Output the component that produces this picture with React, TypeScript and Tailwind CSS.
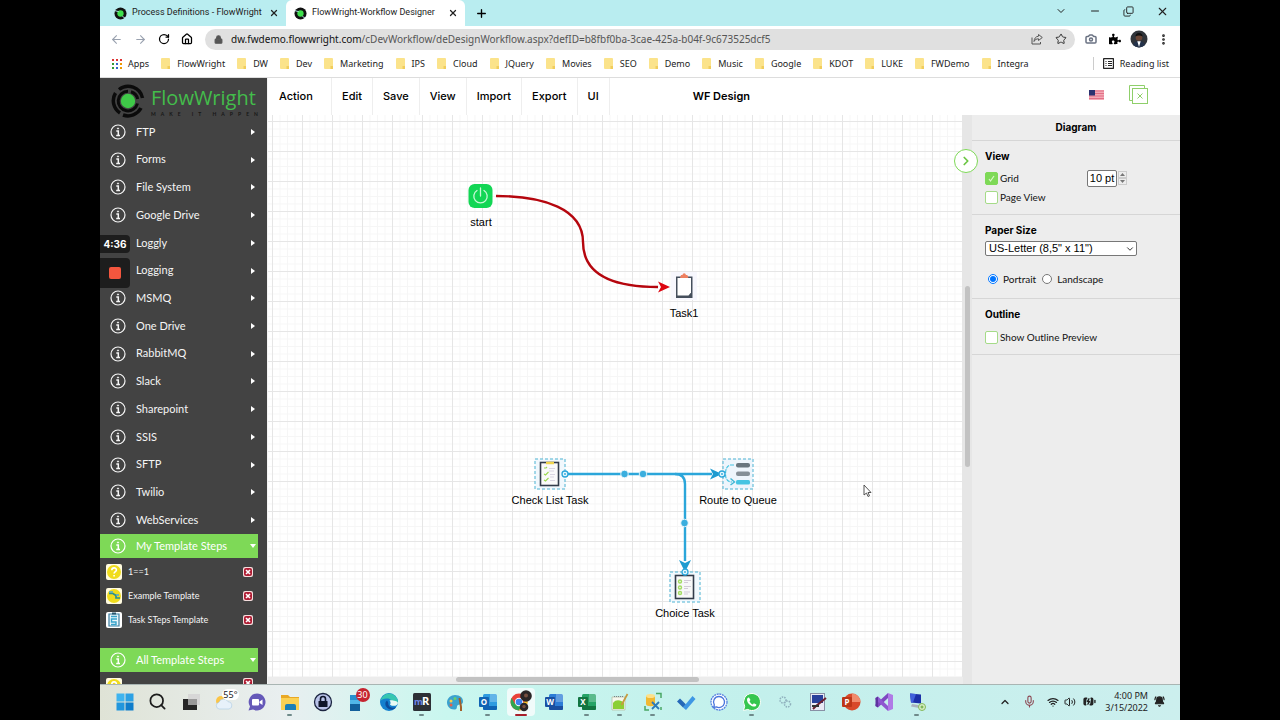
import React, { useState } from 'react';
import {
  ArrowLeft, ArrowRight, BatteryCharging, BellRing, Camera, ChevronDown, ChevronRight, ChevronUp, Copy,
  Home, Lock, Mic, Minus, MoreVertical, Plus, RotateCw, Search, Star, Volume2, Wifi, X,
} from 'lucide-react';
import { FaPuzzlePiece } from 'react-icons/fa';

const bookmarks = [
  'FlowWright', 'DW', 'Dev', 'Marketing', 'IPS', 'Cloud', 'JQuery', 'Movies', 'SEO',
  'Demo', 'Music', 'Google', 'KDOT', 'LUKE', 'FWDemo', 'Integra',
];

const stepGroups = [
  'FTP', 'Forms', 'File System', 'Google Drive', 'Loggly', 'Logging', 'MSMQ', 'One Drive',
  'RabbitMQ', 'Slack', 'Sharepoint', 'SSIS', 'SFTP', 'Twilio', 'WebServices',
];

const menus = ['Edit', 'Save', 'View', 'Import', 'Export', 'UI'];

// Browser chrome

const Favicon = () => (
  <svg viewBox="0 0 14 14" className="h-[13px] w-[13px] shrink-0">
    <circle cx="7" cy="7" r="6.5" fill="#111" />
    <circle cx="7" cy="7" r="3.4" fill="#3ee04c" />
    <path d="M1 4l4 1M9 10l3 2" stroke="#b9edf0" strokeWidth="1" />
  </svg>
);

const FolderIcon = () => (
  <svg viewBox="0 0 9 11" className="h-[11px] w-[9px] shrink-0">
    <rect width="9" height="11" rx="1" fill="#fbe38b" />
    <path d="M6.500 11V8H9v3z" fill="#f1cd5c" />
  </svg>
);

const ShareIcon = () => (
  <svg viewBox="0 0 12 12" className="h-3 w-3" fill="none" stroke="#555" strokeLinejoin="round">
    <path d="M1 4.500V11h8.500V9" />
    <path d="M7.500 1.500L11.300 4.500L7.500 7.500V5.800C5.500 5.800 4 6.500 3 8.500C3.200 5.500 4.800 3.400 7.500 3.200z" />
  </svg>
);

const Avatar = () => (
  <svg viewBox="0 0 18 18" className="h-[18px] w-[18px]">
    <circle cx="9" cy="9" r="8.500" fill="#30343a" />
    <circle cx="9" cy="7.500" r="3.300" fill="#6b4636" />
    <path d="M5.500 6.500a3.500 3.500 0 0 1 7 0c-2-1.500-5-1.500-7 0z" fill="#111" />
    <path d="M3 15c1-3 3-4 6-4s5 1 6 4a8.500 8.500 0 0 1-12 0z" fill="#23324b" />
    <path d="M7.300 11.200L9 17l1.700-5.800z" fill="#fff" />
  </svg>
);

const BrowserChrome = () => (
  <div className="bg-white font-['Noto_Sans','Open_Sans',sans-serif] text-[9px] text-[#222]">
    <div className="flex h-[26px] bg-[#b9edf0] font-['Roboto','Open_Sans',sans-serif]">
      <div className="flex w-[186px] items-center gap-[5px] pl-[14px] pr-[7px]">
        <Favicon />
        <span className="flex-1 whitespace-nowrap">Process Definitions - FlowWright</span>
        <button aria-label="Close tab"><X size={10} strokeWidth={3} /></button>
      </div>
      <div className="flex w-[179px] items-center gap-[5px] rounded-t-md bg-white pl-[8px] pr-[7px]">
        <Favicon />
        <span className="flex-1 whitespace-nowrap">FlowWright-Workflow Designer</span>
        <button aria-label="Close tab"><X size={10} strokeWidth={3} /></button>
      </div>
      <button aria-label="New tab" className="ml-[10px]"><Plus size={13} strokeWidth={2.500} className="text-black" /></button>
      <div className="ml-auto flex items-center gap-[22px] pb-1 pr-[11px]">
        <ChevronDown size={12} />
        <Minus size={12} />
        <Copy size={11} className="-scale-x-100 rotate-180" />
        <X size={13} />
      </div>
    </div>

    <div className="flex h-[26px] items-center pl-[10px] pr-[10px]">
      <div className="flex w-[95px] items-center gap-[11px]">
        <ArrowLeft size={13} className="text-gray-400" />
        <ArrowRight size={13} className="text-gray-400" />
        <RotateCw size={12} strokeWidth={2.500} className="text-black" />
        <Home size={12} strokeWidth={2.500} className="text-black" />
      </div>
      <div className="flex h-[21px] flex-1 items-center rounded-full bg-[#e0e0e0] pl-[9px] pr-[8px]">
        <Lock size={9} strokeWidth={3} fill="#555" className="text-[#555]" />
        <a href="#url" className="ml-[8px] flex-1 whitespace-nowrap text-[10px] text-[#555]">
          <span className="text-[#111]">dw.fwdemo.flowwright.com</span>
          /cDevWorkflow/deDesignWorkflow.aspx?defID=b8fbf0ba-3cae-425a-b04f-9c673525dcf5
        </a>
        <ShareIcon />
        <Star size={12} className="ml-[12px] text-[#333]" />
      </div>
      <div className="flex items-center gap-[9px] pl-[10px]">
        <Camera size={12} strokeWidth={3} className="mr-[3px] text-gray-500" />
        <FaPuzzlePiece size={12} className="text-black" />
        <Avatar />
        <MoreVertical size={13} strokeWidth={3} />
      </div>
    </div>

    <div className="flex h-[26px] items-center border-b border-[#ddd] pb-[2px] pl-[12px] pr-[11px]">
      <svg viewBox="0 0 10 10" className="mr-[6px] h-[10px] w-[10px] shrink-0">
        {['#d33', '#d33', '#d33', '#393', '#36c', '#e90', '#393', '#36c', '#e90'].map((c, i) => (
          <rect key={i} x={(i % 3) * 4} y={Math.floor(i / 3) * 4} width="2" height="2" fill={c} />
        ))}
      </svg>
      <a href="#apps" className="mr-3">Apps</a>
      <nav className="flex items-center gap-3">
        {bookmarks.map((name) => (
          <a key={name} href={`#${name}`} className="flex items-center gap-[7px]">
            <FolderIcon />
            {name}
          </a>
        ))}
      </nav>
      <div className="ml-auto flex items-center gap-[6px] whitespace-nowrap border-l border-[#ccc] pl-[9px]">
        <svg viewBox="0 0 11 11" className="h-[11px] w-[11px]" stroke="#222" fill="none">
          <rect x="0.500" y="0.500" width="10" height="10" rx="1" strokeWidth="1.400" />
          <path d="M2.500 3.500h1M5 3.500h4M2.500 5.500h1M5 5.500h4M2.500 7.500h1M5 7.500h4" />
        </svg>
        Reading list
      </div>
    </div>
  </div>
);

// Sidebar

const InfoIcon = () => (
  <svg viewBox="0 0 16 16" className="h-4 w-4 shrink-0" fill="none" stroke="currentColor">
    <circle cx="8" cy="8" r="7" strokeWidth="1.200" />
    <path d="M6.300 7H8.300V11.300M6.200 11.500H10" strokeWidth="1.500" />
    <circle cx="8" cy="4.500" r="0.600" fill="currentColor" />
  </svg>
);

const DeleteIcon = () => (
  <svg viewBox="0 0 10 10" className="h-[10px] w-[10px]">
    <rect width="10" height="10" rx="2" fill="#f6dede" />
    <rect x="1" y="1" width="8" height="8" rx="2" fill="#b01e35" />
    <path d="M3 3l4 4M7 3L3 7" stroke="#fff" strokeWidth="1.600" />
  </svg>
);

const QuestionIcon = () => (
  <svg viewBox="0 0 16 16" className="h-4 w-4">
    <rect width="16" height="16" rx="2" fill="#fffbe0" />
    <circle cx="8" cy="8" r="7" fill="#f0dc1c" />
    <path d="M5.800 6.200c0-3 4.600-3 4.600-.3 0 1.700-2.300 1.600-2.300 3.500M8.100 11v1.600" fill="none" stroke="#fff" strokeWidth="1.600" />
  </svg>
);

const ExampleIcon = () => (
  <svg viewBox="0 0 16 16" className="h-4 w-4">
    <rect width="16" height="16" rx="2" fill="#fffbe0" />
    <circle cx="8" cy="8" r="7" fill="#f0dc1c" />
    <path d="M3 5.500h4l3 2v2.500h4" fill="none" stroke="#2d8f8a" strokeWidth="1.700" />
    <path d="M3 4h4M10 7h3" stroke="#4aa7d8" strokeWidth="1.500" />
  </svg>
);

const TaskIcon = () => (
  <svg viewBox="0 0 16 16" className="h-4 w-4">
    <rect width="16" height="16" rx="2" fill="#fff" />
    <path d="M3 2v12h10V2z" fill="#eaf6fb" stroke="#3b7ea1" strokeWidth="1.200" />
    <path d="M5 4.500h6M11 7H5.500v3H10v2.500H5" fill="none" stroke="#36a3cb" strokeWidth="1.400" />
    <path d="M6 1.500h4" stroke="#28566e" strokeWidth="2" />
  </svg>
);

const templates = [
  { name: '1==1', icon: <QuestionIcon /> },
  { name: 'Example Template', icon: <ExampleIcon /> },
  { name: 'Task STeps Template', icon: <TaskIcon /> },
];

const Logo = () => (
  <div className="flex h-10 shrink-0 items-center gap-[6px] pl-[11px] pt-[6px]">
    <svg viewBox="0 0 34 34" className="h-[34px] w-[34px] shrink-0" fill="none" stroke="#0b0b0b">
      <path d="M8 5.500A14.700 14.700 0 0 1 31.500 14" strokeWidth="3.500" />
      <path d="M4.500 9A14.700 14.700 0 0 0 9 29" strokeWidth="3.500" />
      <path d="M12 31A14.700 14.700 0 0 0 30 24" strokeWidth="3.500" />
      <path d="M17 7.300A9.800 9.800 0 1 0 26.500 19.500" strokeWidth="3" />
      <path d="M20 7.800A9.800 9.800 0 0 1 26.700 15" strokeWidth="3" />
      <circle cx="17" cy="17" r="7.200" fill="#3fc948" stroke="none" />
    </svg>
    <div className="w-[107px]">
      <div className="font-['Open_Sans','Noto_Sans',sans-serif] text-[20px] leading-[26px] text-[#43bd4b]">FlowWright</div>
      <div className="flex justify-between text-[5px] font-bold leading-[6px] text-[#161616]">
        {'MAKE IT HAPPEN'.split('').map((c, i) => <span key={i} className="min-w-px">{c}</span>)}
      </div>
    </div>
  </div>
);

const GroupBar = ({ title }: { title: string }) => (
  <button className="flex h-6 w-[158px] shrink-0 items-center gap-[10px] bg-[#7ed957] pl-[10px] text-[11px] text-white">
    <InfoIcon />
    <span className="flex-1 whitespace-nowrap text-left">{title}</span>
    <svg viewBox="0 0 6 4" className="mr-[2px] h-1 w-[6px] shrink-0"><path d="M0 0h6L3 4z" fill="#fff" /></svg>
  </button>
);

const Sidebar = () => (
  <aside className="relative flex w-[167px] shrink-0 flex-col overflow-hidden bg-[#434343] font-['Lato','Open_Sans',sans-serif] text-[#f5f5f5]">
    <Logo />
    <ul className="flex h-[416px] shrink-0 flex-col">
      {stepGroups.map((name) => (
        <li key={name} className="flex flex-1">
          <button className="flex flex-1 items-center gap-[10px] pl-[10px] pr-[12px] text-[11px]">
            <InfoIcon />
            <span className="flex-1 text-left">{name}</span>
            <svg viewBox="0 0 4 6" className="h-[6px] w-1"><path d="M0 0v6l4-3z" fill="#fff" /></svg>
          </button>
        </li>
      ))}
    </ul>
    <GroupBar title="My Template Steps" />
    <ul className="mb-4 mt-[2px] shrink-0">
      {templates.map(({ name, icon }) => (
        <li key={name} className="flex h-6 items-center gap-[6px] pl-[6px] pr-[14px] text-[9px]">
          {icon}
          <span className="flex-1">{name}</span>
          <button aria-label={`Delete ${name}`}><DeleteIcon /></button>
        </li>
      ))}
    </ul>
    <GroupBar title="All Template Steps" />
    <div className="flex items-start justify-between pl-[6px] pr-[14px] pt-[6px]">
      <QuestionIcon />
      <DeleteIcon />
    </div>

    {/* recorder controls float over the list */}
    <div className="absolute left-0 top-[157px] w-[30px]">
      <div className="h-[18px] rounded-r bg-[#1d1d1d] text-center font-['Inter',sans-serif] text-[10px] font-bold leading-[18px] text-white">4:36</div>
      <button aria-label="Stop recording" className="mt-[5px] flex h-[30px] w-full items-center justify-center rounded-r bg-[#1d1d1d]">
        <span className="h-3 w-3 rounded-xs bg-[#f4563e]" />
      </button>
    </div>
  </aside>
);

// Designer toolbar

const Flag = () => (
  <svg viewBox="0 0 15 10" className="h-[10px] w-[15px]">
    <rect width="15" height="10" fill="#f3a9b5" />
    <path d="M0 1h15M0 3.500h15M0 6h15M0 8.500h15" stroke="#e26f85" strokeWidth="1.200" />
    <rect width="6" height="5.500" fill="#2c3270" />
  </svg>
);

const Toolbar = () => (
  <header className="flex h-[37px] shrink-0 bg-white text-[11px] font-medium text-black">
    <button className="w-16 border-r border-[#eee] pl-[11px] text-left">Action</button>
    {menus.map((name) => (
      <button key={name} className="border-r border-[#eee] px-[10px]">{name}</button>
    ))}
    <h1 className="self-center pl-[83px] font-semibold">WF Design</h1>
    <div className="ml-auto flex items-center gap-[25px] pb-1 pr-[32px]">
      <Flag />
      <button aria-label="Close designer">
        <svg viewBox="0 0 19 19" className="h-[19px] w-[19px]" fill="none" stroke="#8fcf6a">
          <path d="M3.500 15.500h-3V0.500h15v3" />
          <rect x="3.500" y="3.500" width="15" height="15" />
          <path d="M8.500 8.500l5 5M13.500 8.500l-5 5" />
        </svg>
      </button>
    </div>
  </header>
);

// Diagram canvas

const Connectors = () => (
  <svg width="695" height="562" viewBox="0 0 695 562" className="absolute left-0 top-0" fill="none">
    <path d="M228 81C276 81 315 94 315 127C315 155 337 172 390 172" stroke="#b5060e" strokeWidth="2.400" />
    <path d="M390 166.500L402 172L390 177.500L393 172z" fill="#dd0711" />
    <g stroke="#2ba6da" strokeWidth="2.400">
      <path d="M300 359H444" />
      <path d="M407 359Q417 359 417 369V446" />
    </g>
    <path d="M442 353.500L454 359L442 364.500L445 359z" fill="#1e9bd0" />
    <path d="M411 445L417 457L423 445L417 448z" fill="#1e9bd0" />
    <g fill="#3aaede" stroke="#fff" strokeWidth="0.800">
      <circle cx="356.500" cy="359" r="3.800" />
      <circle cx="375" cy="359" r="3.800" />
      <circle cx="416.500" cy="408" r="3.800" />
    </g>
  </svg>
);

const Handle = ({ x, y }: { x: number; y: number }) => (
  <g>
    <circle cx={x} cy={y} r="3" fill="#e6f7fd" stroke="#2ba6da" strokeWidth="1.300" />
    <circle cx={x} cy={y} r="0.900" fill="#2ba6da" />
  </g>
);

const StartShape = () => (
  <svg width="32" height="32" viewBox="0 0 32 32">
    <rect x="3.500" y="4" width="24" height="24" rx="6" fill="#13d655" />
    <path d="M12 10.500a6.700 6.700 0 1 0 7 0M15.500 8v8" stroke="#c9f8d6" strokeWidth="1.300" fill="none" strokeLinecap="round" />
  </svg>
);

const TaskShape = () => (
  <svg width="32" height="32" viewBox="0 0 32 32">
    <rect x="3" y="1" width="26" height="28" fill="#f7f7fd" />
    <path d="M8 5.500h16.500V27H8z" fill="#454f5c" />
    <path d="M9.500 7h13.500v14.500l-2.500 3H9.500z" fill="#fff" />
    <path d="M12 7l1-3h1.500a1.700 1.700 0 0 1 3.400 0h1.500l1 3z" fill="#ee8060" />
  </svg>
);

const CheckListShape = () => (
  <svg width="34" height="34" viewBox="0 0 34 34" className="overflow-visible">
    <rect x="2" y="2" width="30" height="30" fill="#f1f8fd" stroke="#4cb3d3" strokeDasharray="3 2" />
    <rect x="7.500" y="5.500" width="18" height="23" fill="#fafafa" stroke="#333c4b" strokeWidth="1.600" />
    <path d="M13 6h8" stroke="#f1d54e" strokeWidth="2.500" />
    <path d="M11 11h2l1-1M11 17l1.500 1 3-3M11 23l1.500 1 3-3" stroke="#9bd84f" strokeWidth="1.100" fill="none" />
    <path d="M16 11.500h6M16 14h5M17 17.500h5M17 20h4M17 23.500h5" stroke="#dad6e2" strokeWidth="1" />
    <Handle x={32} y={17} />
  </svg>
);

const QueueShape = () => (
  <svg width="34" height="34" viewBox="0 0 34 34" className="overflow-visible">
    <rect x="2" y="2" width="30" height="30" fill="#eef5fc" stroke="#4cb3d3" strokeDasharray="3 2" />
    <rect x="15" y="6" width="14" height="4.500" rx="2" fill="#69767f" />
    <rect x="15" y="14.500" width="14" height="4.500" rx="2" fill="#858f97" />
    <rect x="15" y="23" width="14" height="4.500" rx="1.500" fill="#46c4e2" />
    <path d="M13 8H9C6 9 4.500 12 4.500 17C4.500 22 6.500 25 11 25" stroke="#46c4e2" strokeWidth="1.200" strokeDasharray="4 1" fill="none" />
    <path d="M9.500 21.500l4 3.500-4 3" stroke="#46b9d6" strokeWidth="1.500" fill="none" />
    <Handle x={1} y={17} />
  </svg>
);

const ChoiceShape = () => (
  <svg width="34" height="34" viewBox="0 0 34 34" className="overflow-visible">
    <rect x="2" y="2" width="30" height="30" fill="#f1f8fd" stroke="#4cb3d3" strokeDasharray="3 2" />
    <rect x="7.500" y="5.500" width="18" height="23" fill="#f8f8f8" stroke="#333c4b" strokeWidth="1.600" />
    <g fill="none" stroke="#a3dc62" strokeWidth="1.400">
      <circle cx="12" cy="11.500" r="1.500" />
      <circle cx="12" cy="17.500" r="1.500" />
      <circle cx="12" cy="23" r="1.500" />
    </g>
    <path d="M16 10.500h7M16 12.500h4M16 16.500h7M16 18.500h4M16 22h6M16 24h4" stroke="#d3cbd8" strokeWidth="1" />
    <Handle x={17} y={2} />
  </svg>
);

const Canvas = () => (
  <div className="relative min-w-0 flex-1 overflow-hidden bg-white bg-[linear-gradient(to_right,#e6e6e6_1px,transparent_1px),linear-gradient(to_bottom,#e6e6e6_1px,transparent_1px),linear-gradient(to_right,#f6f6f6_1px,transparent_1px),linear-gradient(to_bottom,#f6f6f6_1px,transparent_1px)] bg-[size:30px_30px,30px_30px,7.5px_7.5px,7.5px_7.5px] bg-[position:4px_6px] font-['Liberation_Sans',Arial,sans-serif] text-[11px] leading-[14px] text-black">
    <Connectors />
    <div className="absolute left-[163px] top-[65px] flex w-[100px] flex-col items-center gap-[3px]">
      <StartShape />
      start
    </div>
    <div className="absolute left-[366px] top-[156px] flex w-[100px] flex-col items-center gap-[3px]">
      <TaskShape />
      Task1
    </div>
    <div className="absolute left-[232px] top-[342px] flex w-[100px] flex-col items-center gap-[2px]">
      <CheckListShape />
      Check List Task
    </div>
    <div className="absolute left-[420px] top-[342px] flex w-[100px] flex-col items-center gap-[2px]">
      <QueueShape />
      Route to Queue
    </div>
    <div className="absolute left-[367px] top-[455px] flex w-[100px] flex-col items-center gap-[2px]">
      <ChoiceShape />
      Choice Task
    </div>
    <svg viewBox="0 0 9 13" className="absolute left-[595px] top-[369px] h-[13px] w-[9px]">
      <path d="M1 1v10l2.500-2 1.500 3.500 1.500-.7L5 8.500h3z" fill="#fff" stroke="#444" strokeWidth="0.900" />
    </svg>
  </div>
);

// Format panel

const checkStyle =
  'h-[13px] w-[13px] shrink-0 appearance-none rounded-xs border border-[#a5db88] bg-white checked:border-[#7ed957] checked:bg-[#7ed957]';

const headingStyle = "font-['Inter',sans-serif] text-[10px] font-bold text-black";

const FormatPanel = () => {
  const [grid, setGrid] = useState(true);
  const [pageView, setPageView] = useState(false);
  const [orientation, setOrientation] = useState('portrait');
  const [outline, setOutline] = useState(false);

  return (
    <aside className="w-[208px] shrink-0 bg-[#ededed] font-['Lato','Open_Sans',sans-serif] text-[10px] leading-4 text-[#111]">
      <h2 className={`h-[25px] pt-1 text-center ${headingStyle}`}>Diagram</h2>
      <section className="h-[74px] border-t border-[#d6d6d6] px-[13px] pt-[7px]">
        <h3 className={headingStyle}>View</h3>
        <div className="flex h-[18px] items-center pt-[10px]">
          <label className="flex items-center gap-[2px]">
            <span className="relative flex">
              <input type="checkbox" checked={grid} onChange={() => setGrid(!grid)} className={checkStyle} />
              {grid && (
                <svg viewBox="0 0 13 13" className="pointer-events-none absolute inset-0 h-[13px] w-[13px]">
                  <path d="M4 7l1.500 2L9 4" fill="none" stroke="#d9f7c8" strokeWidth="1.200" />
                </svg>
              )}
            </span>
            Grid
          </label>
          <input
            aria-label="Grid size"
            defaultValue="10 pt"
            className="ml-auto h-[17px] w-[30px] rounded-xs border border-[#777] bg-white text-center font-['Liberation_Sans',Arial,sans-serif] text-[11px] text-black"
          />
          <div className="ml-px mr-[40px] flex flex-col">
            <button aria-label="Increase" className="flex h-[7px] w-[9px] items-center justify-center border border-[#ccc]">
              <svg viewBox="0 0 5 3" className="h-[3px] w-[5px]"><path d="M0 3h5L2.500 0z" fill="#777" /></svg>
            </button>
            <button aria-label="Decrease" className="flex h-[7px] w-[9px] items-center justify-center border border-[#ccc]">
              <svg viewBox="0 0 5 3" className="h-[3px] w-[5px]"><path d="M0 0h5L2.500 3z" fill="#777" /></svg>
            </button>
          </div>
        </div>
        <label className="mt-[7px] flex items-center gap-[2px]">
          <input type="checkbox" checked={pageView} onChange={() => setPageView(!pageView)} className={checkStyle} />
          Page View
        </label>
      </section>
      <section className="h-[84px] border-t border-[#d6d6d6] px-[13px] pt-[7px]">
        <h3 className={headingStyle}>Paper Size</h3>
        <div className="relative mt-[3px] w-[152px]">
          <select
            aria-label="Paper size"
            className="block h-[15px] w-full appearance-none rounded-xs border border-[#777] bg-white pl-[3px] font-['Liberation_Sans',Arial,sans-serif] text-[11px] leading-[13px] text-black"
          >
            <option>US-Letter (8,5" x 11")</option>
          </select>
          <ChevronDown size={10} className="pointer-events-none absolute right-[2px] top-[3px]" />
        </div>
        <div className="mt-[15px] flex items-center gap-[6px] pl-[3px]">
          <label className="flex items-center gap-[5px]">
            <input type="radio" name="orientation" className="h-[10px] w-[10px]" checked={orientation === 'portrait'} onChange={() => setOrientation('portrait')} />
            Portrait
          </label>
          <label className="flex items-center gap-[5px]">
            <input type="radio" name="orientation" className="h-[10px] w-[10px]" checked={orientation === 'landscape'} onChange={() => setOrientation('landscape')} />
            Landscape
          </label>
        </div>
      </section>
      <section className="h-[57px] border-y border-[#d6d6d6] px-[13px] pt-[7px]">
        <h3 className={headingStyle}>Outline</h3>
        <label className="mt-[7px] flex items-center gap-[2px]">
          <input type="checkbox" checked={outline} onChange={() => setOutline(!outline)} className={checkStyle} />
          Show Outline Preview
        </label>
      </section>
    </aside>
  );
};

// Taskbar

const Office = ({ color, dark, letter }: { color: string; dark: string; letter: string }) => (
  <svg viewBox="0 0 20 20" className="h-5 w-5">
    <rect x="5" y="2" width="14" height="16" rx="1.500" fill={color} />
    <path d="M12 2h7v8h-7z" fill="#fff" opacity="0.250" />
    <path d="M5 14h14v2.500a1.500 1.500 0 0 1-1.500 1.500h-11A1.500 1.500 0 0 1 5 16.500z" fill={dark} />
    <rect x="1" y="5" width="10" height="10" rx="1" fill={dark} />
    <text x="6" y="13" textAnchor="middle" fontSize="8" fontWeight="700" fill="#fff">{letter}</text>
  </svg>
);

const taskbarApps: { label: string; running?: boolean; active?: boolean; icon: React.ReactNode }[] = [
  {
    label: 'Start',
    icon: (
      <svg viewBox="0 0 20 20" className="h-5 w-5">
        <path d="M1.500 1.500h8v8h-8z" fill="#3fb4ef" />
        <path d="M10.500 1.500h8v8h-8z" fill="#2ca1e4" />
        <path d="M1.500 10.500h8v8h-8z" fill="#2196dd" />
        <path d="M10.500 10.500h8v8h-8z" fill="#0f7dcb" />
      </svg>
    ),
  },
  { label: 'Search', icon: <Search size={19} strokeWidth={2.200} className="text-[#1c1c1c]" /> },
  {
    label: 'Task view',
    icon: (
      <svg viewBox="0 0 20 20" className="h-5 w-5">
        <rect x="2" y="7" width="14" height="11" fill="#262626" />
        <rect x="7" y="2" width="12" height="11" fill="#d5d5d5" opacity="0.900" />
        <rect x="7" y="7" width="9" height="6" fill="#999" />
      </svg>
    ),
  },
  {
    label: 'Weather',
    icon: (
      <div className="relative">
        <svg viewBox="0 0 20 20" className="h-5 w-5">
          <circle cx="7" cy="9" r="5" fill="#fbc547" />
          <path d="M5 17a3.500 3.500 0 0 1 0-6.800 5 5 0 0 1 9-.5A3.700 3.700 0 0 1 15 17z" fill="#e7f1fa" stroke="#a9c9e2" strokeWidth="0.600" />
        </svg>
        <span className="absolute -right-[5px] -top-[3px] rounded-full bg-white px-px text-[9px] leading-[11px] text-[#222]">55°</span>
      </div>
    ),
  },
  {
    label: 'Chat',
    icon: (
      <svg viewBox="0 0 20 20" className="h-5 w-5">
        <path d="M10 1.500a8.500 8.500 0 1 1-4 16L1.500 18.500 3 14.500A8.500 8.500 0 0 1 10 1.500z" fill="#6558b8" />
        <rect x="5" y="7" width="7" height="6.500" rx="1" fill="#fff" />
        <path d="M12.500 9.500l3-2v5.500l-3-2z" fill="#fff" />
      </svg>
    ),
  },
  {
    label: 'File Explorer',
    running: true,
    icon: (
      <svg viewBox="0 0 20 20" className="h-5 w-5">
        <path d="M1 3h7l2 2h9v13H1z" fill="#e9a825" />
        <path d="M1 6h18v12H1z" fill="#fbd153" />
        <path d="M5 18v-4a2 2 0 0 1 2-2h7a2 2 0 0 1 2 2v4z" fill="#1b7fb8" />
      </svg>
    ),
  },
  {
    label: 'KeePass',
    icon: (
      <svg viewBox="0 0 20 20" className="h-5 w-5">
        <circle cx="10" cy="10" r="8.500" fill="#b9c3e9" stroke="#1b2440" strokeWidth="1.300" />
        <path d="M7.500 9V7a2.500 2.500 0 0 1 5 0v2" fill="none" stroke="#10162b" strokeWidth="1.600" />
        <rect x="5.500" y="9" width="9" height="6" rx="0.500" fill="#10162b" />
      </svg>
    ),
  },
  {
    label: 'Phone',
    icon: (
      <div className="relative">
        <svg viewBox="0 0 20 20" className="h-5 w-5">
          <rect x="4" y="3" width="10" height="16" fill="#2790cf" />
          <path d="M4 12h10v7H4z" fill="#125f9b" />
          <path d="M4 8h10v4H4z" fill="#51b6e8" />
        </svg>
        <span className="absolute -right-[4px] -top-[4px] h-[14px] w-[14px] rounded-full bg-[#c52430] text-center text-[9px] leading-[14px] text-white">30</span>
      </div>
    ),
  },
  {
    label: 'Edge',
    icon: (
      <svg viewBox="0 0 20 20" className="h-5 w-5">
        <circle cx="10" cy="10" r="9" fill="#1480cf" />
        <path d="M1.500 9A8.800 8.800 0 0 1 18.900 9c.4 3-2 4.700-4.400 4.500-2 0-3-.8-2.500-1.500C14 9 11 6 7.500 6.500 4.500 6.700 2.500 7.500 1.500 9z" fill="#37c6b0" />
        <path d="M8 8.500c-3 2-2 8 4 9.300 2.500 0 4-1.300 5-2.800-3 1.500-6.500.5-7.500-2-.5-1.500 0-3-1.500-4.500z" fill="#0c4c9c" />
        <path d="M11 12.500c1-1.500.5-3-.5-4 2.500-.5 8 .5 8.500 2.500-.7 2.200-2.500 3-4.500 2.800-2 0-3-.5-3.500-1.300z" fill="#e8faf4" />
      </svg>
    ),
  },
  {
    label: 'mRemote',
    running: true,
    icon: (
      <svg viewBox="0 0 20 20" className="h-5 w-5">
        <rect x="1" y="1" width="18" height="18" rx="1.500" fill="#2c3036" />
        <text x="2" y="13" fontSize="9" fontWeight="700" fill="#7087e8">m</text>
        <text x="10" y="13" fontSize="11" fontWeight="700" fill="#fff">R</text>
      </svg>
    ),
  },
  {
    label: 'Paint',
    icon: (
      <svg viewBox="0 0 20 20" className="h-5 w-5">
        <path d="M10 3c5 0 8.500 3 8 7-.5 3-3 2-5 3-2 1 0 4-3 4.500C5 18 2 14 2 10.500 2 6 6 3 10 3z" fill="#3ba2cf" />
        <circle cx="6" cy="9" r="1.500" fill="#f5d04c" />
        <circle cx="10" cy="6.500" r="1.500" fill="#67d06f" />
        <circle cx="6" cy="13" r="1.500" fill="#e85f4c" />
        <path d="M14.500 6l1.500 9v4" stroke="#a2602a" strokeWidth="2" fill="none" />
      </svg>
    ),
  },
  { label: 'Outlook', running: true, icon: <Office color="#2e9be0" dark="#0f63b3" letter="O" /> },
  {
    label: 'Chrome',
    active: true,
    icon: (
      <div className="flex h-7 w-7 items-center justify-center rounded bg-[#f0fbfa]">
        <svg viewBox="0 0 24 24" className="h-6 w-6">
          <circle cx="10" cy="12" r="8.500" fill="#e9423a" />
          <path d="M2.600 8A8.500 8.500 0 0 0 10 20.500l4-6.500H6z" fill="#30a652" />
          <path d="M18 9a8.500 8.500 0 0 1-8 11.500l4-7.500z" fill="#f9c528" />
          <circle cx="10" cy="12" r="4.200" fill="#fff" />
          <circle cx="10" cy="12" r="3.300" fill="#3f82ee" />
          <circle cx="17" cy="6" r="5.800" fill="#2a2626" />
          <circle cx="17" cy="5.500" r="2" fill="#775040" />
          <circle cx="15" cy="17" r="4.300" fill="#2a2626" />
          <circle cx="15" cy="16.500" r="1.700" fill="#775040" />
        </svg>
      </div>
    ),
  },
  { label: 'Word', icon: <Office color="#2c7cd6" dark="#1a4fa0" letter="W" /> },
  { label: 'Excel', running: true, icon: <Office color="#25a366" dark="#127541" letter="X" /> },
  {
    label: 'Notepad++',
    running: true,
    icon: (
      <svg viewBox="0 0 20 20" className="h-5 w-5">
        <path d="M2 5h13v13H2z" fill="#f6f7ee" stroke="#b7c0a4" strokeWidth="0.800" />
        <path d="M3 11c3-4 8-3 11 0v6H3z" fill="#8bcf35" />
        <path d="M17.500 2l-6 11" stroke="#c69a3f" strokeWidth="1.700" />
        <path d="M4 4.500h9" stroke="#79808b" strokeDasharray="1 1" />
      </svg>
    ),
  },
  {
    label: 'SQL tools',
    running: true,
    icon: (
      <svg viewBox="0 0 20 20" className="h-5 w-5">
        <path d="M3 4v8c0 3 9 3 9 0V4z" fill="#f1b832" />
        <ellipse cx="7.500" cy="4" rx="4.500" ry="2" fill="#fce08a" />
        <path d="M13 1.500h5V6M2 14v4h4M18 15v3" fill="none" stroke="#49a764" strokeWidth="1.500" />
        <path d="M9 10l7 7M16 10l-7 7" stroke="#2c7ab8" strokeWidth="1.800" />
      </svg>
    ),
  },
  {
    label: 'To Do',
    icon: (
      <svg viewBox="0 0 20 20" className="h-5 w-5">
        <path d="M1 9.500l3-3 6 6-3 3z" fill="#2568b8" />
        <path d="M7 15.500L16.500 4l3 3L10 18z" fill="#3e97e4" />
      </svg>
    ),
  },
  {
    label: 'Signal',
    icon: (
      <svg viewBox="0 0 20 20" className="h-5 w-5">
        <circle cx="10" cy="10" r="8" fill="#fff" stroke="#5680e0" strokeWidth="1.300" strokeDasharray="2 0.700" />
        <path d="M10 4.500a5.500 5.500 0 1 1-2.500 10.400L4.700 15.500l.6-2.600A5.500 5.500 0 0 1 10 4.500z" fill="#fff" stroke="#4a76dc" strokeWidth="1.300" />
      </svg>
    ),
  },
  {
    label: 'WhatsApp',
    running: true,
    icon: (
      <svg viewBox="0 0 20 20" className="h-5 w-5">
        <path d="M10 1.500a8.500 8.500 0 1 1-4.200 15.900L1.500 18.500l1.200-4.200A8.500 8.500 0 0 1 10 1.500z" fill="#36c64f" stroke="#fff" strokeWidth="1" />
        <path d="M7 5.500l1.500 2.500-1 1.200c.8 1.600 1.700 2.500 3.200 3.200l1.200-1.200 2.500 1.300c-.2 2-1.700 2.300-3 2-3.500-.8-6.400-4-6.400-6.800C5 6.300 6 5.200 7 5.500z" fill="#fff" />
      </svg>
    ),
  },
  {
    label: 'Services',
    icon: (
      <svg viewBox="0 0 20 20" className="h-5 w-5" fill="none" stroke="#8fb0bd" strokeWidth="1.500">
        <circle cx="8" cy="8" r="3" strokeDasharray="1.500 1" />
        <circle cx="12.500" cy="12" r="3" strokeDasharray="1.500 1" />
      </svg>
    ),
  },
  {
    label: 'Snipping',
    icon: (
      <svg viewBox="0 0 20 20" className="h-5 w-5">
        <rect x="2.500" y="1.500" width="14" height="17" fill="#eaeaf5" stroke="#8890a5" />
        <rect x="4" y="3" width="11" height="8" fill="#28409b" />
        <path d="M18 6L8 14l-3 3" stroke="#6b2130" strokeWidth="2" fill="none" />
        <path d="M4 14h7" stroke="#333" strokeWidth="2" />
      </svg>
    ),
  },
  {
    label: 'PowerPoint',
    icon: (
      <svg viewBox="0 0 20 20" className="h-5 w-5">
        <circle cx="11" cy="10" r="8.500" fill="#d8492a" />
        <path d="M11 1.500a8.500 8.500 0 0 1 8.500 8.500H11z" fill="#f08b6c" />
        <rect x="1" y="5" width="10" height="10" rx="1" fill="#bd3617" />
        <text x="6" y="13" textAnchor="middle" fontSize="8" fontWeight="700" fill="#fff">P</text>
      </svg>
    ),
  },
  {
    label: 'Visual Studio',
    icon: (
      <svg viewBox="0 0 20 20" className="h-5 w-5">
        <path d="M14 1l5 2v14l-5 2z" fill="#b07ae6" />
        <path d="M14 1v5L4 15.500 1.500 14V12.500z" fill="#7f48c2" />
        <path d="M14 19v-5L4 4.500 1.500 6v1.500z" fill="#8f57d1" />
        <path d="M1.500 6l2.500-1.500v11L1.500 14z" fill="#5f349f" />
      </svg>
    ),
  },
  {
    label: 'Remote Desktop',
    running: true,
    icon: (
      <svg viewBox="0 0 20 20" className="h-5 w-5">
        <path d="M3 1.500l11 1v9L4 10.500z" fill="#1b2fa8" />
        <path d="M3 1.500l6 .5-3 8.500-2 0z" fill="#4160dc" />
        <path d="M5 12l9 1.500-2 2.500-8-1.500z" fill="#aab3bd" />
        <circle cx="15" cy="15" r="3.500" fill="#d8edc4" stroke="#83b95b" />
        <path d="M13.500 15h3M15 13.500v3" stroke="#5ea637" />
      </svg>
    ),
  },
];

const Taskbar = () => (
  <footer className="flex h-[36px] shrink-0 items-center border-t border-[#a9b5b3] bg-[linear-gradient(90deg,#dfe3d6_0%,#e9eff0_17%,#c9f7ef_32%,#c3f0ec_60%,#ccefee_100%)] pb-[2px] pl-[8px] pr-[15px] font-['Noto_Sans','Open_Sans',sans-serif] text-[#222]">
    {taskbarApps.map(({ label, icon, running, active }) => (
      <button key={label} aria-label={label} className="relative flex h-full w-[33px] shrink-0 items-center justify-center">
        {icon}
        {running && <span className="absolute bottom-[2px] h-[2px] w-[5px] rounded-full bg-[#6f8a8a]" />}
        {active && <span className="absolute bottom-[2px] h-[2px] w-[12px] rounded-full bg-[#a8202c]" />}
      </button>
    ))}
    <div className="ml-auto flex items-center">
      <ChevronUp size={12} strokeWidth={2.500} />
      <Mic size={13} className="ml-[12px] text-[#8b4450]" />
      <Wifi size={12} strokeWidth={2.500} className="ml-[11px]" />
      <Volume2 size={12} className="ml-[5px]" />
      <BatteryCharging size={13} strokeWidth={2.500} fill="#222" className="ml-[7px]" />
      <div className="w-[52px] whitespace-nowrap text-right text-[9px] leading-3">
        <div>4:00 PM</div>
        <div>3/15/2022</div>
      </div>
      <BellRing size={11} strokeWidth={2.500} fill="#222" className="ml-[6px]" />
    </div>
  </footer>
);

export default function App() {
  return (
    <div className="h-screen bg-black px-[100px]">
      <div className="flex h-full flex-col overflow-hidden bg-white">
        <BrowserChrome />
        <div className="flex min-h-0 flex-1 font-['Inter',sans-serif]">
          <Sidebar />
          <main className="flex min-w-0 flex-1 flex-col border-l border-[#f4f4f4]">
            <Toolbar />
            <div className="flex min-h-0 flex-1">
              <div className="flex min-w-0 flex-1 flex-col">
                <Canvas />
                <div className="flex h-[7px] shrink-0 bg-[#ececec]">
                  <div className="ml-[27%] h-[5px] w-[35%] rounded-full bg-[#c2c2c2]" />
                </div>
              </div>
              <div className="relative w-[9px] shrink-0 bg-[#e6e6e6] pt-[171px]">
                <div className="mx-auto h-[181px] w-[5px] rounded-full bg-[#c2c2c2]" />
                <button
                  aria-label="Collapse panel"
                  className="absolute -left-[9px] top-[34px] flex h-6 w-6 items-center justify-center rounded-full border border-[#7ed957] bg-white text-[#6cc644]"
                >
                  <ChevronRight size={14} strokeWidth={3} />
                </button>
              </div>
              <FormatPanel />
            </div>
          </main>
        </div>
        <Taskbar />
      </div>
    </div>
  );
}
